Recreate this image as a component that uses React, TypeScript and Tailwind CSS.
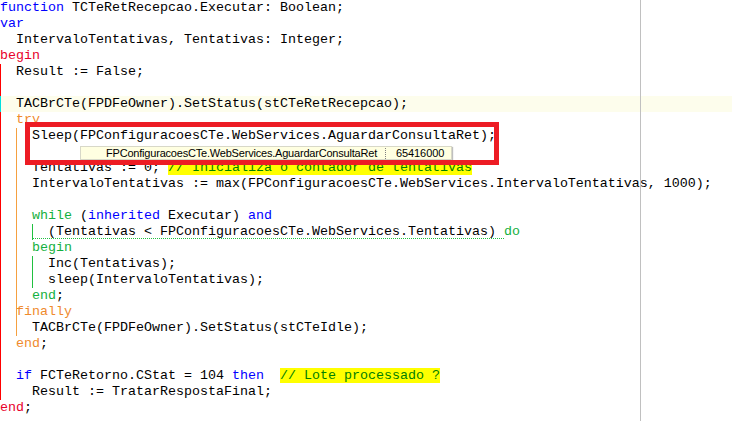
import React from "react";

type Seg = { t: string; c?: string };

const K = "text-[#0000ff]";
const R = "text-[#e8002a]";
const O = "text-[#ef8a2c]";
const G = "text-[#14b040]";
const C = "text-[#008000] bg-[#ffff00]";

const s = (t: string, c?: string): Seg => ({ t, c });

function Line({ segs = [], className = "" }: { segs?: Seg[]; className?: string }) {
  return (
    <div className={"h-[16px] whitespace-pre " + className}>
      {segs.map((g, j) => (
        <span key={j} className={g.c}>
          {g.t}
        </span>
      ))}
    </div>
  );
}

export default function App() {
  return (
    <div className="relative w-[732px] h-[421px] overflow-hidden bg-white">
      <div className="flex flex-col font-['Liberation_Mono','Courier_New',monospace] text-[13.333px] leading-[16px] text-black">
        <Line segs={[s("function", K), s(" TCTeRetRecepcao.Executar: Boolean;")]} />
        <Line segs={[s("var", K)]} />
        <Line segs={[s("  IntervaloTentativas, Tentativas: Integer;")]} />
        <Line segs={[s("begin", R)]} />

        {/* begin..end block (red guide) */}
        <div className="flex flex-col shadow-[inset_1px_0_0_#ff0000]">
          <Line segs={[s("  Result := False;")]} />
          <Line />
          <Line
            className="bg-[#fdfdec] shadow-[inset_1px_0_0_#00e0e0]"
            segs={[s("  TACBrCTe(FPDFeOwner).SetStatus(stCTeRetRecepcao);")]}
          />
          <Line segs={[s("  "), s("try", O)]} />

          {/* try..end block (orange guide) */}
          <div className="ml-[16px] flex flex-col shadow-[inset_1px_0_0_#f5a040]">
            <Line segs={[s("  Sleep(FPConfiguracoesCTe.WebServices.AguardarConsultaRet);")]} />
            <Line />
            <Line segs={[s("  Tentativas := 0; "), s("// Inicializa o contador de tentativas", C)]} />
            <Line
              segs={[
                s("  IntervaloTentativas := max(FPConfiguracoesCTe.WebServices.IntervaloTentativas, 1000);"),
              ]}
            />
            <Line />
            <Line segs={[s("  "), s("while", G), s(" ("), s("inherited", K), s(" Executar) "), s("and", K)]} />
            <div className="ml-[16px] h-[16px] whitespace-pre shadow-[inset_1px_0_0_#20c040]">
              <span className="inline-block h-[15px] align-top border-b border-dotted border-[#20c040]">
                {"  (Tentativas < FPConfiguracoesCTe.WebServices.Tentativas) "}
              </span>
              <span className={G}>do</span>
            </div>
            <Line segs={[s("  "), s("begin", G)]} />
            <div className="ml-[16px] flex flex-col shadow-[inset_1px_0_0_#20c040]">
              <Line segs={[s("  Inc(Tentativas);")]} />
              <Line segs={[s("  sleep(IntervaloTentativas);")]} />
            </div>
            <Line segs={[s("  "), s("end", G), s(";")]} />
            <Line segs={[s("finally", O)]} />
            <Line segs={[s("  TACBrCTe(FPDFeOwner).SetStatus(stCTeIdle);")]} />
          </div>

          <Line segs={[s("  "), s("end", O), s(";")]} />
          <Line />
          <Line
            segs={[
              s("  "),
              s("if", K),
              s(" FCTeRetorno.CStat = 104 "),
              s("then", K),
              s("  "),
              s("// Lote processado ?", C),
            ]}
          />
          <Line segs={[s("    Result := TratarRespostaFinal;")]} />
        </div>

        <Line segs={[s("end", R), s(";")]} />
      </div>

      {/* right margin */}
      <div className="absolute left-[640px] top-0 h-full w-px bg-[#c0c0c0]" />

      {/* tooltip */}
      <div className="absolute left-[80px] top-[146px] h-[14px] w-[372px] flex items-center border border-[#d8d8c8] bg-[#ffffe1] shadow-[1px_1px_1px_rgba(0,0,0,0.25)] font-['Liberation_Sans',Arial,sans-serif] text-[11px] leading-[12px] text-black">
        <span className="pl-[25px] whitespace-pre tracking-[-0.2px]">
          FPConfiguracoesCTe.WebServices.AguardarConsultaRet
        </span>
        <span className="ml-[8px] h-[11px] border-l border-dotted border-[#808080]" />
        <span className="pl-[10px] tracking-[-0.1px]">65416000</span>
      </div>

      {/* red annotation box */}
      <div className="absolute left-[25px] top-[122px] h-[43px] w-[474px] border-[5px] border-[#ed1c24]" />
    </div>
  );
}
